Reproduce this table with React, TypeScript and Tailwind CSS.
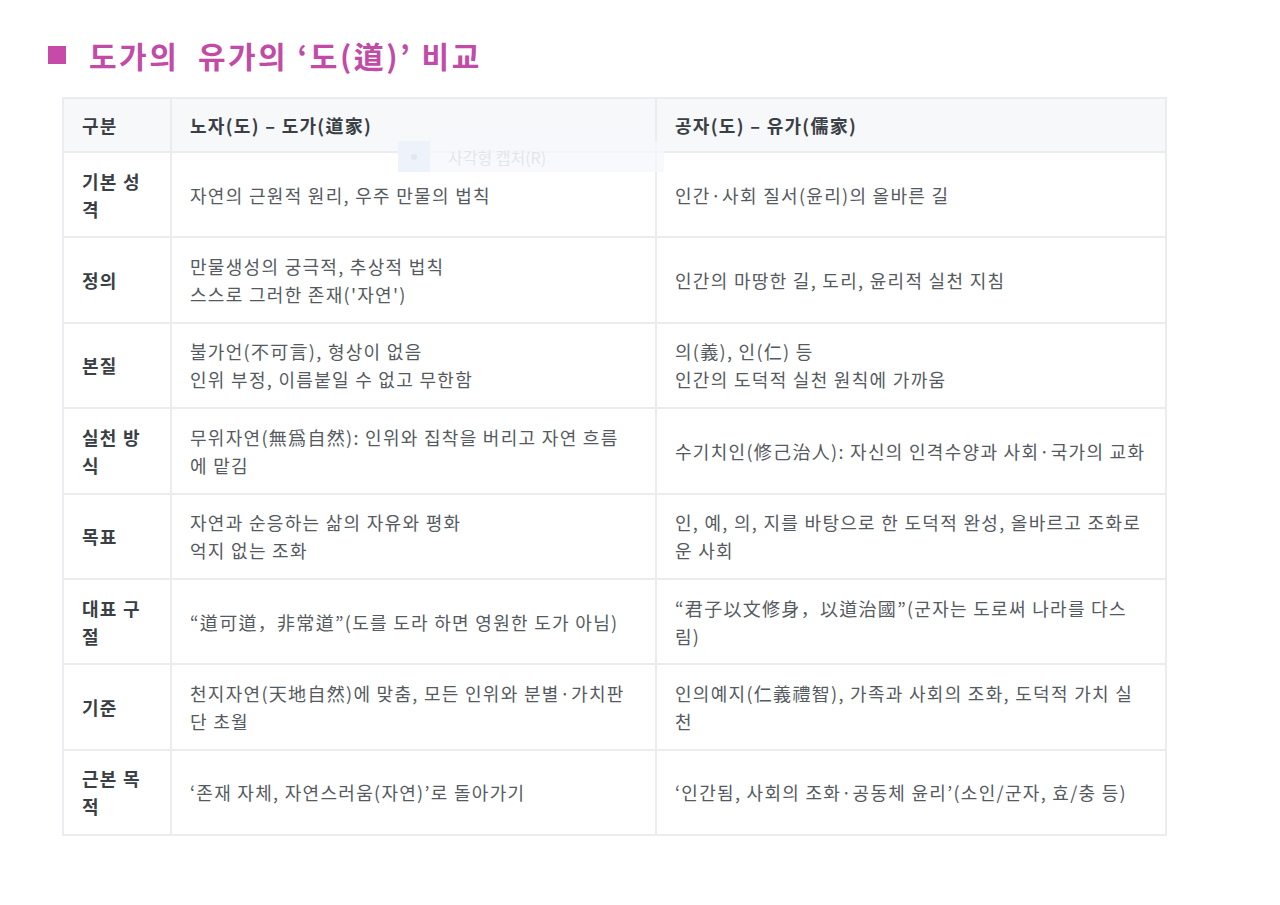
import React from "react";

const rows: { k: string; a: React.ReactNode; b: React.ReactNode }[] = [
  { k: "기본 성격", a: "자연의 근원적 원리, 우주 만물의 법칙", b: "인간·사회 질서(윤리)의 올바른 길" },
  { k: "정의", a: <>만물생성의 궁극적, 추상적 법칙<br />스스로 그러한 존재('자연')</>, b: "인간의 마땅한 길, 도리, 윤리적 실천 지침" },
  { k: "본질", a: <>불가언(不可言), 형상이 없음<br />인위 부정, 이름붙일 수 없고 무한함</>, b: <>의(義), 인(仁) 등<br />인간의 도덕적 실천 원칙에 가까움</> },
  { k: "실천 방식", a: "무위자연(無爲自然): 인위와 집착을 버리고 자연 흐름에 맡김", b: "수기치인(修己治人): 자신의 인격수양과 사회·국가의 교화" },
  { k: "목표", a: <>자연과 순응하는 삶의 자유와 평화<br />억지 없는 조화</>, b: "인, 예, 의, 지를 바탕으로 한 도덕적 완성, 올바르고 조화로운 사회" },
  { k: "대표 구절", a: "“道可道，非常道”(도를 도라 하면 영원한 도가 아님)", b: "“君子以文修身，以道治國”(군자는 도로써 나라를 다스림)" },
  { k: "기준", a: "천지자연(天地自然)에 맞춤, 모든 인위와 분별·가치판단 초월", b: "인의예지(仁義禮智), 가족과 사회의 조화, 도덕적 가치 실천" },
  { k: "근본 목적", a: "‘존재 자체, 자연스러움(자연)’로 돌아가기", b: "‘인간됨, 사회의 조화·공동체 윤리’(소인/군자, 효/충 등)" },
];

export default function App() {
  return (
    <div
      className="relative w-[1280px] h-[905px] bg-white"
      style={{ fontFamily: '"Noto Sans CJK KR", "Noto Sans", sans-serif' }}
    >
      <div className="pt-[13px] pl-[48px] flex items-center h-[97px]">
        <div className="w-[18px] h-[18px] bg-[#c84aa8]" />
        <div className="ml-[23px] text-[30px] font-bold text-[#c14ba6] tracking-[2.5px] leading-[40px] whitespace-pre">
          도가의  유가의 ‘도(道)’ 비교
        </div>
      </div>
      <div className="ml-[62px] w-[1105px]">
        <table className="w-full border-collapse text-[18px] leading-[28px] tracking-[1.3px]">
          <colgroup>
            <col className="w-[108px]" />
            <col className="w-[485px]" />
            <col />
          </colgroup>
          <thead>
            <tr className="bg-[#f7f8fa] h-[54px]">
              <th className="border-2 border-[#eaecef] pl-[18px] pr-4 text-left font-bold text-[#3a3f46]">구분</th>
              <th className="border-2 border-[#eaecef] pl-[18px] pr-6 text-left font-bold text-[#3a3f46]">노자(도) – 도가(道家)</th>
              <th className="border-2 border-[#eaecef] pl-[18px] pr-4 text-left font-bold text-[#3a3f46]">공자(도) – 유가(儒家)</th>
            </tr>
          </thead>
          <tbody>
            {rows.map((r) => (
              <tr key={r.k} className="h-[85.4px]">
                <td className="border-2 border-[#eaecef] pl-[18px] pr-4 font-bold text-[#3a3f46] align-middle">{r.k}</td>
                <td className="border-2 border-[#eaecef] pl-[18px] pr-6 text-[#555a61] align-middle">{r.a}</td>
                <td className="border-2 border-[#eaecef] pl-[18px] pr-4 text-[#555a61] align-middle">{r.b}</td>
              </tr>
            ))}
          </tbody>
        </table>
      </div>
      <div className="absolute left-[398px] top-[141px] w-[266px] h-[31px] bg-[#f6f8fc]/80 flex items-center">
        <div className="w-[32px] h-full bg-[#eef3fb] flex items-center justify-center">
          <div className="w-[6px] h-[6px] rounded-full bg-[#e3e8f0]" />
        </div>
        <div className="ml-[18px] text-[16px] text-[#e2e6ec]">사각형 캡처(R)</div>
      </div>
    </div>
  );
}
